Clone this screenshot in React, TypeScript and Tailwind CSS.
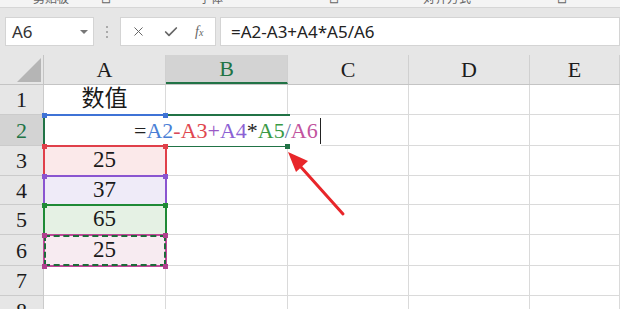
import { X, Check } from "lucide-react";

const COLS = [
  { key: "A", w: "w-[122px]" },
  { key: "B", w: "w-[122px]" },
  { key: "C", w: "w-[121px]" },
  { key: "D", w: "w-[121px]" },
  { key: "E", w: "w-[90px]" },
];

const ROWS = [
  { n: 1, h: "h-[30px]", a: "数值", fill: "bg-white" },
  { n: 2, h: "h-[31px]", a: "", fill: "bg-white" },
  { n: 3, h: "h-[30px]", a: "25", fill: "bg-[#fbe9ea]" },
  { n: 4, h: "h-[29px]", a: "37", fill: "bg-[#efebf8]" },
  { n: 5, h: "h-[30px]", a: "65", fill: "bg-[#e5f1e4]" },
  { n: 6, h: "h-[31px]", a: "25", fill: "bg-[#f7ebf1]" },
  { n: 7, h: "h-[30px]", a: "", fill: "bg-white" },
  { n: 8, h: "h-[30px]", a: "", fill: "bg-white" },
];

const serif = "font-['Liberation_Serif','Noto_Sans_CJK_SC',serif]";

function Handle({ className }: { className: string }) {
  return <div className={`absolute h-[5px] w-[5px] ${className}`} />;
}

export default function App() {
  return (
    <div className="relative h-[309px] w-[620px] overflow-hidden bg-white font-['Noto_Sans','Noto_Sans_CJK_SC',sans-serif]">
      {/* ribbon group labels, mostly scrolled off */}
      <div className="h-[8px] overflow-hidden border-b border-[#d6d6d6] bg-[#f4f4f4]">
        <div className="-mt-[9px] flex text-[12px] leading-[16px] text-[#666]">
          <span className="ml-[33px]">剪贴板</span>
          <span className="ml-[32px]">⊡</span>
          <span className="ml-[88px]">字体</span>
          <span className="ml-[106px]">⊡</span>
          <span className="ml-[84px]">对齐方式</span>
          <span className="ml-[86px]">⊡</span>
        </div>
      </div>

      {/* formula bar */}
      <div className="flex h-[47px] items-start bg-[#e6e6e6] pt-[9px]">
        <div className="ml-[5px] flex h-[29px] w-[89px] items-center justify-between border border-[#d4d4d4] bg-white pl-[6px] pr-[5px] text-[17px] text-[#333]">
          <span>A6</span>
          <span className="mt-[1px] h-0 w-0 border-x-[4px] border-t-[4px] border-x-transparent border-t-[#777]" />
        </div>
        <div className="ml-[12px] flex h-[29px] flex-col justify-center gap-[3px]">
          <span className="h-[2px] w-[2px] bg-[#aaa]" />
          <span className="h-[2px] w-[2px] bg-[#aaa]" />
          <span className="h-[2px] w-[2px] bg-[#aaa]" />
        </div>
        <div className="ml-[12px] flex h-[29px] w-[96px] items-center border border-[#d4d4d4] bg-white text-[#666]">
          <X size={15} strokeWidth={1.6} className="ml-[10px]" />
          <Check size={16} strokeWidth={2.6} className="ml-[17px]" />
          <span className="ml-[16px] font-['Liberation_Serif',serif] text-[14px] italic">
            f<span className="text-[10px]">x</span>
          </span>
        </div>
        <div className="ml-[4px] flex h-[29px] flex-1 items-center border border-[#d4d4d4] bg-white pl-[10px] text-[17px] text-[#222]">
          =A2-A3+A4*A5/A6
        </div>
      </div>

      {/* column headers */}
      <div className={`flex h-[30px] border-b border-[#c4c4c4] bg-[#e6e6e6] text-[22px] text-[#1c1c1c] ${serif}`}>
        <div className="relative w-[44px] border-r border-[#c4c4c4]">
          <svg className="absolute bottom-[2px] right-[2px]" width="24" height="24" viewBox="0 0 24 24">
            <polygon points="24,0 24,24 0,24" fill="#b5b5b5" />
          </svg>
        </div>
        {COLS.map((c) => (
          <div
            key={c.key}
            className={`${c.w} flex items-center justify-center border-r border-[#d0d0d0] ${
              c.key === "B" ? "border-b-2 border-b-[#217346] bg-[#d3d3d3] text-[#217346]" : ""
            }`}
          >
            {c.key}
          </div>
        ))}
      </div>

      {/* grid body */}
      <div className={`relative ${serif}`}>
        {ROWS.map((r) => (
          <div key={r.n} className={`flex ${r.h}`}>
            <div
              className={`flex w-[44px] items-center justify-center border-b border-r border-[#cbcbcb] text-[22px] ${
                r.n === 2 ? "bg-[#d3d3d3] text-[#217346]" : "bg-[#e6e6e6] text-[#1c1c1c]"
              }`}
            >
              {r.n}
            </div>
            {COLS.map((c, i) => (
              <div
                key={c.key}
                className={`${c.w} flex items-center justify-center border-b border-r border-[#dadada] text-[23px] text-[#1a1a1a] ${
                  i === 0 ? r.fill : "bg-white"
                }`}
              >
                {i === 0 ? r.a : ""}
              </div>
            ))}
          </div>
        ))}

        {/* edit box spanning A2:B2 */}
        <div className="absolute left-[43px] top-[29px] h-[33px] w-[247px] border-2 border-[#217346] bg-white" />
        <div className={`absolute left-[134px] top-[31px] flex h-[30px] items-center bg-white text-[22px] leading-none ${serif}`}>
          <span className="text-[#222]">=</span>
          <span className="text-[#4a7fd6]">A2</span>
          <span className="text-[#d94a5a]">-</span>
          <span className="text-[#e0474f]">A3</span>
          <span className="text-[#9a58c6]">+</span>
          <span className="text-[#8b61d4]">A4</span>
          <span className="text-[#222]">*</span>
          <span className="text-[#3a9a45]">A5</span>
          <span className="text-[#6a7ab0]">/</span>
          <span className="text-[#c2549e]">A6</span>
          <span className="ml-[2px] h-[26px] w-[1.5px] bg-[#222]" />
        </div>
        <Handle className="left-[285px] top-[59px] bg-[#217346]" />

        {/* A2 blue range */}
        <div className="absolute left-[44px] top-[29px] h-[2px] w-[122px] bg-[#3f73d6]" />
        <Handle className="left-[42px] top-[28px] bg-[#3f73d6]" />
        <Handle className="left-[163px] top-[28px] bg-[#3f73d6]" />

        {/* A3 red */}
        <div className="absolute left-[43px] top-[60px] h-[32px] w-[124px] border-2 border-[#e0404a]" />
        <Handle className="left-[42px] top-[59px] bg-[#e0404a]" />
        <Handle className="left-[163px] top-[59px] bg-[#e0404a]" />

        {/* A4 purple */}
        <div className="absolute left-[43px] top-[90px] h-[31px] w-[124px] border-2 border-[#8a55d0]" />
        <Handle className="left-[42px] top-[89px] bg-[#8a55d0]" />
        <Handle className="left-[163px] top-[89px] bg-[#8a55d0]" />

        {/* A5 green */}
        <div className="absolute left-[43px] top-[119px] h-[32px] w-[124px] border-2 border-[#1f8a36]" />
        <Handle className="left-[42px] top-[118px] bg-[#1f8a36]" />
        <Handle className="left-[163px] top-[118px] bg-[#1f8a36]" />

        {/* A6 magenta + marching ants */}
        <div className="absolute left-[43px] top-[149px] h-[33px] w-[124px] border-2 border-[#c0499a]" />
        <div className="absolute left-[44px] top-[150px] h-[31px] w-[122px] border-2 border-dashed border-[#1d6b3a]" />
        <Handle className="left-[42px] top-[148px] bg-[#b0408e]" />
        <Handle className="left-[163px] top-[148px] bg-[#b0408e]" />
        <Handle className="left-[42px] top-[179px] bg-[#b0408e]" />
        <Handle className="left-[163px] top-[179px] bg-[#b0408e]" />
      </div>

      {/* red arrow */}
      <svg className="pointer-events-none absolute left-0 top-0" width="620" height="309" viewBox="0 0 620 309">
        <line x1="343" y1="214" x2="300" y2="166" stroke="#e8262a" strokeWidth="3" strokeLinecap="round" />
        <polygon points="288,152 308,161 296,172" fill="#e8262a" />
      </svg>
    </div>
  );
}
